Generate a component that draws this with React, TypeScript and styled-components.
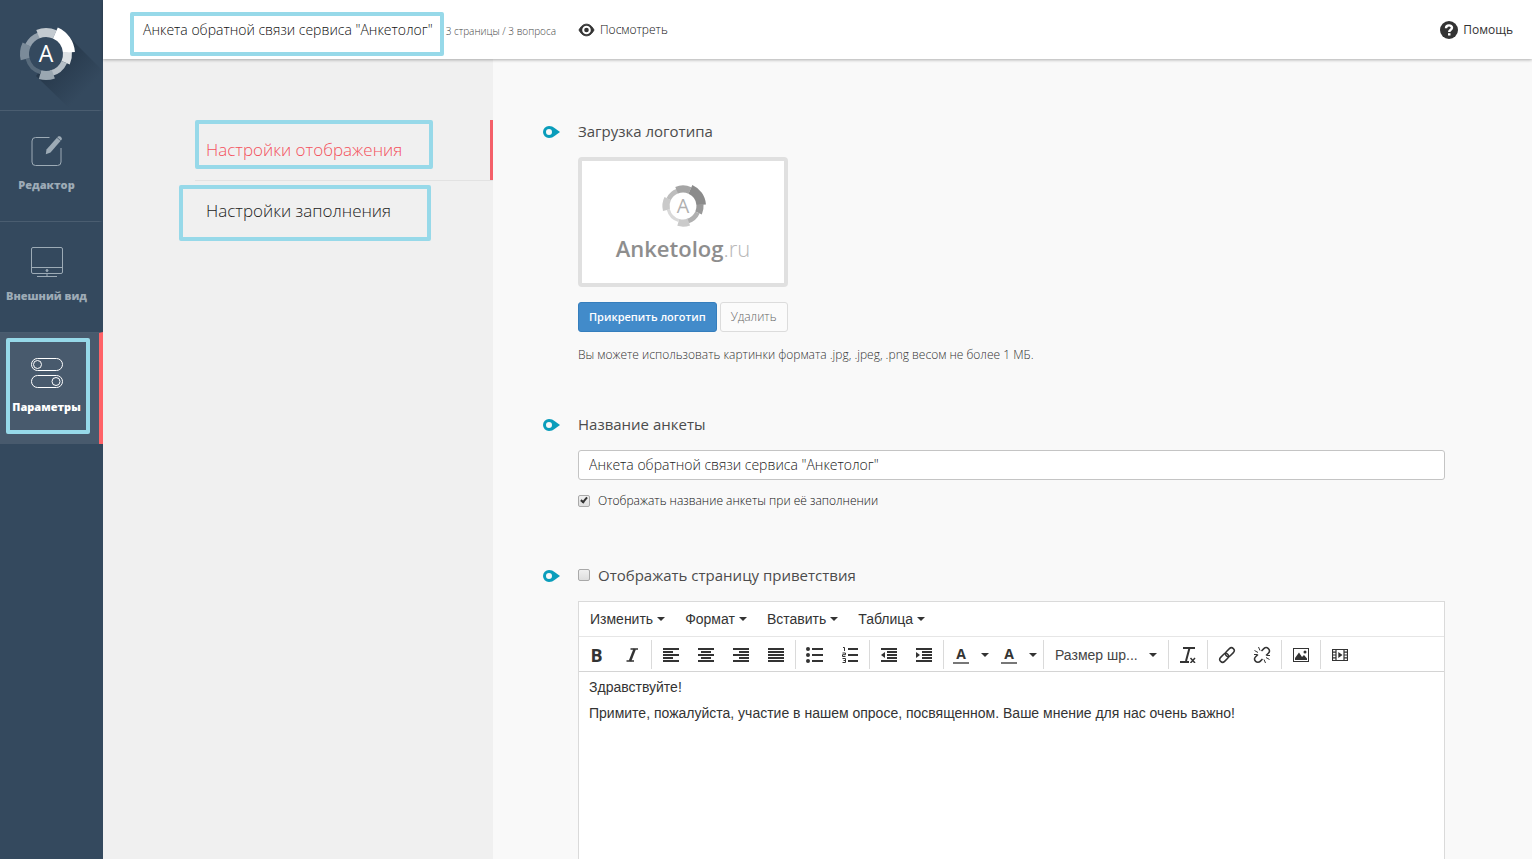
import React from "react";
import styled, { createGlobalStyle, css } from "styled-components";

const ui = `"Open Sans", "Noto Sans", sans-serif`;
const editorFont = `"Liberation Sans", Arial, sans-serif`;

const GlobalStyle = createGlobalStyle`
  *, *::before, *::after { box-sizing: border-box; }
  body { margin: 0; background: #f9f9f9; color: #333; font-family: ${ui}; }
  button, input, select, textarea { font-family: inherit; margin: 0; }
  a { color: inherit; text-decoration: none; }
`;

const Page = styled.div`
  display: grid;
  grid-template-columns: 103px 1fr;
  min-height: 100vh;
`;

const Sidebar = styled.nav`
  background: #34495e;
  display: flex;
  flex-direction: column;
`;

const Brand = styled.a`
  display: block;
  height: 110px;
  svg { display: block; }
`;

const SideItem = styled.a<{ $active?: boolean }>`
  position: relative;
  height: ${(p) => (p.$active ? 112 : 111)}px;
  padding: 23px 6px 0 0;
  display: flex;
  flex-direction: column;
  align-items: center;
  gap: 9px;
  border-top: 1px solid #4a5d70;
  border-right: 4px solid ${(p) => (p.$active ? "#ff6368" : "transparent")};
  background: ${(p) => (p.$active ? "#485a6d" : "#34495e")};
  background-clip: padding-box;
  color: ${(p) => (p.$active ? "#fff" : "#9dabb6")};
  font-size: 11px;
  line-height: 16px;
  font-weight: 800;
  white-space: nowrap;
  svg { display: block; flex: none; }
`;

const Highlight = styled.span<{ $inset: string }>`
  position: absolute;
  inset: ${(p) => p.$inset};
  border: 4px solid #97d9e9;
  border-radius: 2px;
  pointer-events: none;
`;

const Workspace = styled.div`
  display: flex;
  flex-direction: column;
  min-width: 0;
`;

const Header = styled.header`
  position: relative;
  z-index: 1;
  height: 59px;
  padding: 0 19px 0 40px;
  display: flex;
  align-items: center;
  background: #fff;
  box-shadow: 0 1px 3px rgba(0, 0, 0, 0.3);
  white-space: nowrap;
`;

const Title = styled.h1`
  position: relative;
  margin: 0 13px 0 0;
  font-size: 14px;
  line-height: 20px;
  font-weight: 300;
  color: #111;
`;

const Meta = styled.span`
  margin-right: 22px;
  padding-top: 2px;
  font-size: 10px;
  line-height: 16px;
  font-weight: 300;
  color: #444;
`;

const HeaderLink = styled.a<{ $end?: boolean }>`
  display: flex;
  align-items: center;
  gap: 5px;
  font-size: 12px;
  line-height: 16px;
  font-weight: ${(p) => (p.$end ? 400 : 300)};
  color: ${(p) => (p.$end ? "#333" : "#111")};
  ${(p) => p.$end && css`margin-left: auto;`}
`;

const Columns = styled.div`
  flex: 1;
  display: grid;
  grid-template-columns: 390px 1fr;
`;

const SubNav = styled.aside`
  background: #f0f0f0;
  padding: 61px 0 0 92px;
`;

const SubLink = styled.a<{ $active?: boolean }>`
  position: relative;
  display: block;
  height: 61px;
  padding-left: 11px;
  font-size: 17px;
  line-height: 60px;
  font-weight: 300;
  color: ${(p) => (p.$active ? "#f4505c" : "#222")};
  ${(p) =>
    p.$active &&
    css`
      border-bottom: 1px solid #e2e2e2;
      box-shadow: inset -3px 0 #f4606a;
    `}
`;

const Content = styled.main`
  min-width: 0;
  padding: 61px 87px 0 50px;
  display: flex;
  flex-direction: column;
  gap: 48px;
`;

const SectionRow = styled.section<{ $grow?: boolean }>`
  display: grid;
  grid-template-columns: 17px minmax(0, 1fr);
  column-gap: 18px;
  ${(p) => p.$grow && css`flex: 1;`}
  > svg { margin-top: 6px; display: block; }
`;

const SectionBody = styled.div`
  display: flex;
  flex-direction: column;
`;

const Heading = styled.h2`
  margin: 0 0 15px;
  display: flex;
  align-items: center;
  font-size: 15px;
  line-height: 22px;
  font-weight: 400;
  color: #4c4c4c;
`;

const LogoPreview = styled.div`
  width: 210px;
  height: 130px;
  border: 4px solid #e0e0e0;
  border-radius: 4px;
  background: #fff;
  padding-top: 22px;
  display: flex;
  flex-direction: column;
  align-items: center;
  gap: 3px;
`;

const Wordmark = styled.div`
  font-size: 22px;
  line-height: 32px;
  font-weight: 600;
  color: #8e8e8e;
  span { font-weight: 300; color: #b8b8b8; }
`;

const ButtonRow = styled.div`
  margin-top: 15px;
  display: flex;
  gap: 3px;
`;

const Button = styled.button<{ $primary?: boolean }>`
  height: 30px;
  padding: 0 10px;
  border-radius: 3px;
  line-height: 18px;
  border: 1px solid ${(p) => (p.$primary ? "#357ebd" : "#dcdcdc")};
  background: ${(p) => (p.$primary ? "#428bca" : "#fbfbfb")};
  color: ${(p) => (p.$primary ? "#fff" : "#666")};
  font-size: ${(p) => (p.$primary ? 11 : 12)}px;
  font-weight: ${(p) => (p.$primary ? 600 : 300)};
`;

const Hint = styled.p`
  margin: 13px 0 0;
  font-size: 12px;
  line-height: 20px;
  font-weight: 300;
  color: #333;
`;

const TextInput = styled.input`
  height: 30px;
  width: 100%;
  padding: 0 10px 1px;
  border: 1px solid #c4c4c4;
  border-radius: 3px;
  background: #fff;
  font-size: 14px;
  font-weight: 300;
  color: #222;
`;

const CheckLabel = styled.label`
  display: flex;
  align-items: center;
  gap: 8px;
`;

const CheckRow = styled.div`
  padding: 11px 0 5px;
  font-size: 12px;
  line-height: 20px;
  font-weight: 300;
  color: #111;
`;

const Checkbox = styled.input`
  appearance: none;
  position: relative;
  flex: none;
  width: 12px;
  height: 12px;
  border: 1px solid #a9a9a9;
  border-radius: 2px;
  background: linear-gradient(#f0f0f0, #dedede);
  &:checked::after {
    content: "";
    position: absolute;
    left: 3px;
    top: 0;
    width: 4px;
    height: 7px;
    border: solid #333;
    border-width: 0 2px 2px 0;
    transform: rotate(40deg);
  }
`;

const Editor = styled.div`
  flex: 1;
  display: flex;
  flex-direction: column;
  border: 1px solid #dadada;
  border-bottom: 0;
  background: #fff;
  font-family: ${editorFont};
`;

const MenuBar = styled.div`
  display: flex;
  height: 35px;
  padding-left: 1px;
  border-bottom: 1px solid #e6e6e6;
`;

const MenuButton = styled.button`
  display: flex;
  align-items: center;
  gap: 4px;
  padding: 0 10px;
  border: 0;
  background: none;
  font-size: 14px;
  color: #333;
`;

const Toolbar = styled.div`
  display: flex;
  height: 35px;
  padding: 3px 0 2px;
  border-bottom: 1px solid #d4d4d4;
`;

const ToolGroup = styled.div`
  position: relative;
  display: flex;
  padding: 0 2px 0 1px;
  border-right: 1px solid #dadada;
  &:first-child { padding-left: 0; }
  &:last-child { border-right: 0; }
`;

const ToolButton = styled.button<{ $split?: boolean }>`
  width: ${(p) => (p.$split ? 48 : 35)}px;
  padding: 0 ${(p) => (p.$split ? 4 : 0)}px 0 ${(p) => (p.$split ? 8 : 0)}px;
  display: flex;
  align-items: center;
  justify-content: ${(p) => (p.$split ? "space-between" : "center")};
  border: 0;
  background: none;
  color: #333;
  svg { display: block; }
`;

const BoldGlyph = styled.span`
  font-family: ${ui};
  font-size: 18px;
  line-height: 28px;
  font-weight: 700;
`;

const ColorGlyph = styled.span`
  width: 16px;
  border-bottom: 2px solid #777;
  font-family: ${ui};
  font-size: 14px;
  line-height: 16px;
  font-weight: 700;
`;

const SizeSelect = styled.select`
  appearance: none;
  width: 121px;
  padding: 0 28px 0 10px;
  border: 0;
  background: none;
  font-size: 14px;
  color: #444;
`;

const SelectCaret = styled.span`
  position: absolute;
  right: 11px;
  top: 13px;
  pointer-events: none;
  svg { display: block; }
`;

const Message = styled.textarea`
  flex: 1;
  min-height: 160px;
  width: 100%;
  padding: 2px 10px;
  border: 0;
  outline: 0;
  resize: none;
  display: block;
  background: #fff;
  font-size: 14px;
  line-height: 26px;
  color: #333;
`;

type Segment = [start: number, end: number, outer: number, light: string, gray: string];

const segments: Segment[] = [
  [205, 250, 23, "#93a0ac", "#bdbdbd"],
  [248, 294, 26, "#c3cad0", "#a5a5a5"],
  [355, 384, 26, "#dde1e4", "#999999"],
  [384, 436, 23, "#b5bec6", "#b0b0b0"],
  [70, 106, 26, "#9aa7b1", "#cbcbcb"],
  [106, 166, 21, "#576a7b", "#d9d9d9"],
  [166, 206, 26, "#7b8b99", "#c9c9c9"],
  [294, 356, 29, "#ffffff", "#8b8b8b"],
];

function arc(start: number, end: number, outer: number, inner = 17) {
  const at = (deg: number, r: number) => {
    const a = (deg * Math.PI) / 180;
    return `${(Math.cos(a) * r).toFixed(2)} ${(Math.sin(a) * r).toFixed(2)}`;
  };
  return `M${at(start, outer)}A${outer} ${outer} 0 0 1 ${at(end, outer)}L${at(end, inner)}A${inner} ${inner} 0 0 0 ${at(start, inner)}Z`;
}

function Ring({ gray }: { gray?: boolean }) {
  return (
    <>
      {segments.map(([s, e, r, light, dark]) => (
        <path key={s} d={arc(s, e, r)} fill={gray ? dark : light} />
      ))}
      <text y={gray ? 9 : 8} textAnchor="middle" fontSize={gray ? 25 : 23} fontWeight="400" fill={gray ? "#b0b0b0" : "#fff"}>
        A
      </text>
    </>
  );
}

const BrandLogo = () => (
  <svg width="103" height="110" viewBox="0 0 103 110" aria-label="Anketolog">
    <defs>
      <linearGradient id="fade" gradientUnits="userSpaceOnUse" x1="50" y1="58" x2="84" y2="92">
        <stop offset="0" stopColor="#1f2f40" stopOpacity="0.7" />
        <stop offset="1" stopColor="#1f2f40" stopOpacity="0" />
      </linearGradient>
    </defs>
    <path d="M68 36 135 103 105 143 36 76Z" fill="url(#fade)" />
    <circle cx="46" cy="54" r="18" fill="#34495e" />
    <g transform="translate(46 54)">
      <Ring />
    </g>
  </svg>
);

const Marker = () => (
  <svg width="17" height="12" viewBox="0 0 17 12" aria-hidden="true">
    <path
      fillRule="evenodd"
      fill="#0a9dbb"
      d="M6 0C8.500 0 10 .8 11.500 2L17 6 11.500 10C10 11.200 8.500 12 6 12A6 6 0 0 1 6 0ZM6 3a3 3 0 1 0 0 6 3 3 0 0 0 0-6Z"
    />
  </svg>
);

const Caret = () => (
  <svg width="8" height="4" viewBox="0 0 8 4" aria-hidden="true">
    <path d="M0 0h8L4 4z" fill="#333" />
  </svg>
);

const EditIcon = () => (
  <svg width="32" height="34" viewBox="0 0 32 34" fill="none" aria-hidden="true">
    <path d="M18.500 3.500H4.500a3.500 3.500 0 0 0-3.500 3.500v21a3.500 3.500 0 0 0 3.500 3.500h22a3.500 3.500 0 0 0 3.500-3.500V14" stroke="#9dabb6" />
    <path d="M15.500 15.500 27 2.600c1.800-1.500 4.800 1 3.600 3.200L19.500 18.500l-4.700 1.800z" fill="#9dabb6" />
    <path d="m26 3.500 3.800 3.300" stroke="#34495e" strokeWidth=".7" />
  </svg>
);

const MonitorIcon = () => (
  <svg width="32" height="34" viewBox="0 0 32 34" fill="none" stroke="#9dabb6" aria-hidden="true">
    <rect x=".5" y="2.500" width="31" height="26" rx="1.500" />
    <path d="M.5 22.500h31M16 28.500v3M6 31.500h20" />
    <circle cx="16" cy="25.500" r="1" fill="#9dabb6" />
  </svg>
);

const TogglesIcon = () => (
  <svg width="32" height="34" viewBox="0 0 32 34" fill="none" stroke="#fff" aria-hidden="true">
    <rect x=".5" y="2.500" width="31" height="12" rx="6" />
    <circle cx="6.500" cy="8.500" r="4" />
    <rect x=".5" y="19.500" width="31" height="12" rx="6" />
    <circle cx="25" cy="25.500" r="4" />
  </svg>
);

const EyeIcon = () => (
  <svg width="17" height="14" viewBox="0 0 17 14" aria-hidden="true">
    <path d="M1 7C3 3 5.500 1.200 8.500 1.200S14 3 16 7c-2 4-4.500 5.800-7.500 5.800S3 11 1 7Z" fill="#333" stroke="#333" />
    <circle cx="8.500" cy="7" r="4.300" fill="#fff" />
    <circle cx="8.500" cy="7" r="2.300" fill="#333" />
  </svg>
);

const HelpIcon = () => (
  <svg width="18" height="18" viewBox="0 0 18 18" aria-hidden="true">
    <circle cx="9" cy="9" r="9" fill="#333" />
    <path d="M6 7.200C6 3.400 12 3.500 12 6.800 12 8.700 9.200 8.700 9.200 11" stroke="#fff" strokeWidth="2.400" fill="none" />
    <rect x="8" y="12.200" width="2.500" height="2.300" fill="#fff" />
  </svg>
);

const Bars = ({ rows }: { rows: [number, number][] }) => (
  <svg width="16" height="14" viewBox="0 0 16 14" aria-hidden="true">
    {rows.map(([x, w], i) => (
      <rect key={i} x={x} y={i * 3} width={w} height="2" fill="#333" />
    ))}
  </svg>
);

const BulletIcon = () => (
  <svg width="17" height="16" viewBox="0 0 17 16" fill="#333" aria-hidden="true">
    {[2, 8, 14].map((y) => (
      <g key={y}>
        <circle cx="2" cy={y} r="2" />
        <rect x="6" y={y - 1} width="11" height="2" />
      </g>
    ))}
  </svg>
);

const NumberedIcon = () => (
  <svg width="16" height="16" viewBox="0 0 16 16" fill="#333" aria-hidden="true">
    <path d="M1 .5h1.500V4M.5 6h3v1.700h-3v1.800h3M.5 11.500h3v4h-3M1.500 13.500h2" fill="none" stroke="#333" />
    {[2, 8, 14].map((y) => (
      <rect key={y} x="6" y={y - 1} width="10" height="2" />
    ))}
  </svg>
);

const IndentIcon = ({ out }: { out?: boolean }) => (
  <svg width="16" height="14" viewBox="0 0 16 14" fill="#333" aria-hidden="true">
    <path d="M0 0h16v2H0zM6 3h10v2H6zM6 6h10v2H6zM6 9h10v2H6zM0 12h16v2H0z" />
    <path d={out ? "M4 4v6L0 7z" : "M0 4v6l4-3z"} />
  </svg>
);

const ItalicIcon = () => (
  <svg width="16" height="16" viewBox="0 0 16 16" aria-hidden="true">
    <path d="M6.500 2H14M2.500 14H10" stroke="#333" strokeWidth="1.500" fill="none" />
    <path d="M10.700 2 6 14" stroke="#333" strokeWidth="2.500" fill="none" />
  </svg>
);

const ClearIcon = () => (
  <svg width="16" height="16" viewBox="0 0 16 16" fill="none" stroke="#333" aria-hidden="true">
    <path d="M3 1h12M9.500 1 6 14" strokeWidth="2" />
    <path d="M0 15h9" strokeWidth="2" />
    <path d="m10.500 11 4.500 5M15 11l-4.500 5" strokeWidth="1.500" />
  </svg>
);

const LinkIcon = ({ broken }: { broken?: boolean }) => (
  <svg width="18" height="18" viewBox="0 0 18 18" fill="none" stroke="#333" aria-hidden="true">
    <g strokeWidth="1.500" transform="rotate(-45 9 9)">
      {broken ? (
        <path d="M6.500 12.200H3.200a3.200 3.200 0 0 1 0-6.400h3.300M11.500 5.800h3.300a3.200 3.200 0 0 1 0 6.400h-3.300" />
      ) : (
        <>
          <rect x="0" y="6.200" width="10" height="5.600" rx="2.800" />
          <rect x="8" y="6.200" width="10" height="5.600" rx="2.800" />
        </>
      )}
    </g>
    {broken && <path d="M1.500 4.500 5 6.500M5.500 1 7 4.500M1 8.500h3M16.500 13.500 13 11.500M12.500 17 11 13.500M17 9.500h-3" />}
  </svg>
);

const ImageIcon = () => (
  <svg width="16" height="14" viewBox="0 0 16 14" aria-hidden="true">
    <rect x=".5" y=".5" width="15" height="13" fill="none" stroke="#333" />
    <path d="M2 12V10l4-5.500L9 9l2-2 3 3.500V12z" fill="#333" />
    <circle cx="12" cy="4" r="1.500" fill="#333" />
  </svg>
);

const MediaIcon = () => (
  <svg width="16" height="12" viewBox="0 0 16 12" aria-hidden="true">
    <path d="M.5.5h15v11H.5zM4 .5v11M12 .5v11M.5 3.200H4M.5 6H4M.5 8.800H4M12 3.200h3.500M12 6h3.500M12 8.800h3.500" fill="none" stroke="#333" strokeWidth="1.200" />
    <path d="M6.300 3v6L10.500 6z" fill="#333" />
  </svg>
);

const menus = ["Изменить", "Формат", "Вставить", "Таблица"];

const toolGroups: { label: string; icon: React.ReactNode }[][] = [
  [
    { label: "Полужирный", icon: <BoldGlyph>B</BoldGlyph> },
    { label: "Курсив", icon: <ItalicIcon /> },
  ],
  [
    { label: "По левому краю", icon: <Bars rows={[[0, 16], [0, 10], [0, 16], [0, 10], [0, 16]]} /> },
    { label: "По центру", icon: <Bars rows={[[0, 16], [3, 10], [0, 16], [3, 10], [0, 16]]} /> },
    { label: "По правому краю", icon: <Bars rows={[[0, 16], [6, 10], [0, 16], [6, 10], [0, 16]]} /> },
    { label: "По ширине", icon: <Bars rows={[[0, 16], [0, 16], [0, 16], [0, 16], [0, 16]]} /> },
  ],
  [
    { label: "Маркированный список", icon: <BulletIcon /> },
    { label: "Нумерованный список", icon: <NumberedIcon /> },
  ],
  [
    { label: "Уменьшить отступ", icon: <IndentIcon out /> },
    { label: "Увеличить отступ", icon: <IndentIcon /> },
  ],
];

const insertGroups: { label: string; icon: React.ReactNode }[][] = [
  [{ label: "Очистить формат", icon: <ClearIcon /> }],
  [
    { label: "Вставить ссылку", icon: <LinkIcon /> },
    { label: "Удалить ссылку", icon: <LinkIcon broken /> },
  ],
  [{ label: "Изображение", icon: <ImageIcon /> }],
  [{ label: "Видео", icon: <MediaIcon /> }],
];

const ToolGroups = ({ groups }: { groups: typeof toolGroups }) => (
  <>
    {groups.map((group) => (
      <ToolGroup key={group[0].label}>
        {group.map((tool) => (
          <ToolButton key={tool.label} type="button" aria-label={tool.label}>
            {tool.icon}
          </ToolButton>
        ))}
      </ToolGroup>
    ))}
  </>
);

const Section = ({ grow, children }: { grow?: boolean; children: React.ReactNode }) => (
  <SectionRow $grow={grow}>
    <Marker />
    <SectionBody>{children}</SectionBody>
  </SectionRow>
);

export default function App() {
  return (
    <Page>
      <GlobalStyle />
      <Sidebar>
        <Brand href="#"><BrandLogo /></Brand>
        <SideItem href="#"><EditIcon />Редактор</SideItem>
        <SideItem href="#"><MonitorIcon />Внешний вид</SideItem>
        <SideItem href="#" $active>
          <TogglesIcon />Параметры
          <Highlight $inset="5px 9px 10px 6px" />
        </SideItem>
      </Sidebar>
      <Workspace>
        <Header>
          <Title>
            Анкета обратной связи сервиса "Анкетолог"
            <Highlight $inset="-8px -11px -16px -13px" />
          </Title>
          <Meta>3 страницы / 3 вопроса</Meta>
          <HeaderLink href="#"><EyeIcon />Посмотреть</HeaderLink>
          <HeaderLink href="#" $end><HelpIcon />Помощь</HeaderLink>
        </Header>
        <Columns>
          <SubNav>
            <SubLink href="#" $active>
              Настройки отображения
              <Highlight $inset="0 60px 11px 0" />
            </SubLink>
            <SubLink href="#">
              Настройки заполнения
              <Highlight $inset="4px 62px 1px -16px" />
            </SubLink>
          </SubNav>
          <Content>
            <Section>
              <Heading>Загрузка логотипа</Heading>
              <LogoPreview>
                <svg width="46" height="46" viewBox="-29 -29 58 58" aria-hidden="true"><Ring gray /></svg>
                <Wordmark>Anketolog<span>.ru</span></Wordmark>
              </LogoPreview>
              <ButtonRow>
                <Button type="button" $primary>Прикрепить логотип</Button>
                <Button type="button">Удалить</Button>
              </ButtonRow>
              <Hint>Вы можете использовать картинки формата .jpg, .jpeg, .png весом не более 1 МБ.</Hint>
            </Section>
            <Section>
              <Heading as="label" htmlFor="survey-name">Название анкеты</Heading>
              <TextInput id="survey-name" defaultValue={'Анкета обратной связи сервиса "Анкетолог"'} />
              <CheckRow>
                <CheckLabel>
                  <Checkbox type="checkbox" defaultChecked />
                  Отображать название анкеты при её заполнении
                </CheckLabel>
              </CheckRow>
            </Section>
            <Section grow>
              <Heading>
                <CheckLabel>
                  <Checkbox type="checkbox" />
                  Отображать страницу приветствия
                </CheckLabel>
              </Heading>
              <Editor>
                <MenuBar>
                  {menus.map((name) => (
                    <MenuButton key={name} type="button">{name}<Caret /></MenuButton>
                  ))}
                </MenuBar>
                <Toolbar>
                  <ToolGroups groups={toolGroups} />
                  <ToolGroup>
                    <ToolButton type="button" $split aria-label="Цвет текста"><ColorGlyph>A</ColorGlyph><Caret /></ToolButton>
                    <ToolButton type="button" $split aria-label="Цвет фона"><ColorGlyph>A</ColorGlyph><Caret /></ToolButton>
                  </ToolGroup>
                  <ToolGroup>
                    <SizeSelect aria-label="Размер шрифта"><option>Размер шр...</option></SizeSelect>
                    <SelectCaret><Caret /></SelectCaret>
                  </ToolGroup>
                  <ToolGroups groups={insertGroups} />
                </Toolbar>
                <Message
                  aria-label="Текст приветствия"
                  defaultValue={"Здравствуйте!\nПримите, пожалуйста, участие в нашем опросе, посвященном. Ваше мнение для нас очень важно!"}
                />
              </Editor>
            </Section>
          </Content>
        </Columns>
      </Workspace>
    </Page>
  );
}
